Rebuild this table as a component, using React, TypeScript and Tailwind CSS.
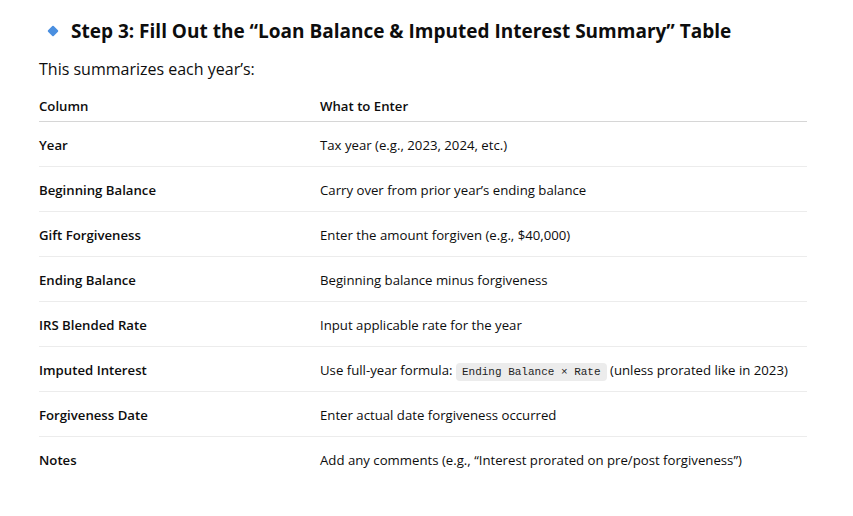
const rows: { col: string; what: React.ReactNode }[] = [
  { col: "Year", what: "Tax year (e.g., 2023, 2024, etc.)" },
  { col: "Beginning Balance", what: "Carry over from prior year’s ending balance" },
  { col: "Gift Forgiveness", what: "Enter the amount forgiven (e.g., $40,000)" },
  { col: "Ending Balance", what: "Beginning balance minus forgiveness" },
  { col: "IRS Blended Rate", what: "Input applicable rate for the year" },
  {
    col: "Imputed Interest",
    what: (
      <>
        Use full-year formula:{" "}
        <code className="rounded-[4px] bg-[#ececec] px-[6px] py-[3px] font-['Liberation_Mono',monospace] text-[11px] leading-none text-[#1f1f1f]">
          Ending Balance × Rate
        </code>{" "}
        (unless prorated like in 2023)
      </>
    ),
  },
  { col: "Forgiveness Date", what: "Enter actual date forgiveness occurred" },
  { col: "Notes", what: "Add any comments (e.g., “Interest prorated on pre/post forgiveness”)" },
];

export default function App() {
  return (
    <div className="min-h-[516px] w-[853px] bg-white font-['Open_Sans',sans-serif] text-[#0d0d0d]">
      <div className="pl-[39px] pr-[46px] pt-[18px]">
        <h3 className="flex items-center gap-[14px] pl-[10px] text-[19px] font-bold leading-[26px]">
          <span className="inline-block h-[8px] w-[8px] rotate-45 rounded-[1px] bg-[#4a8fe0]" />
          <span>Step 3: Fill Out the “Loan Balance &amp; Imputed Interest Summary” Table</span>
        </h3>
        <p className="mt-[13px] text-[16px] leading-[24px]">This summarizes each year’s:</p>

        <table className="mt-[9px] w-full border-collapse text-[13.2px] leading-[20px]">
          <thead>
            <tr className="border-b border-[#d6d6d6]">
              <th className="w-[281px] pb-[5px] pt-[6px] text-left font-semibold">Column</th>
              <th className="pb-[5px] pt-[6px] text-left font-semibold">What to Enter</th>
            </tr>
          </thead>
          <tbody>
            {rows.map((r, i) => (
              <tr key={r.col} className={i < rows.length - 1 ? "border-b border-[#ececec]" : ""}>
                <td className="h-[45px] pb-0 pt-[2px] font-semibold">{r.col}</td>
                <td className="h-[45px] pb-0 pt-[2px]">{r.what}</td>
              </tr>
            ))}
          </tbody>
        </table>
      </div>
    </div>
  );
}
